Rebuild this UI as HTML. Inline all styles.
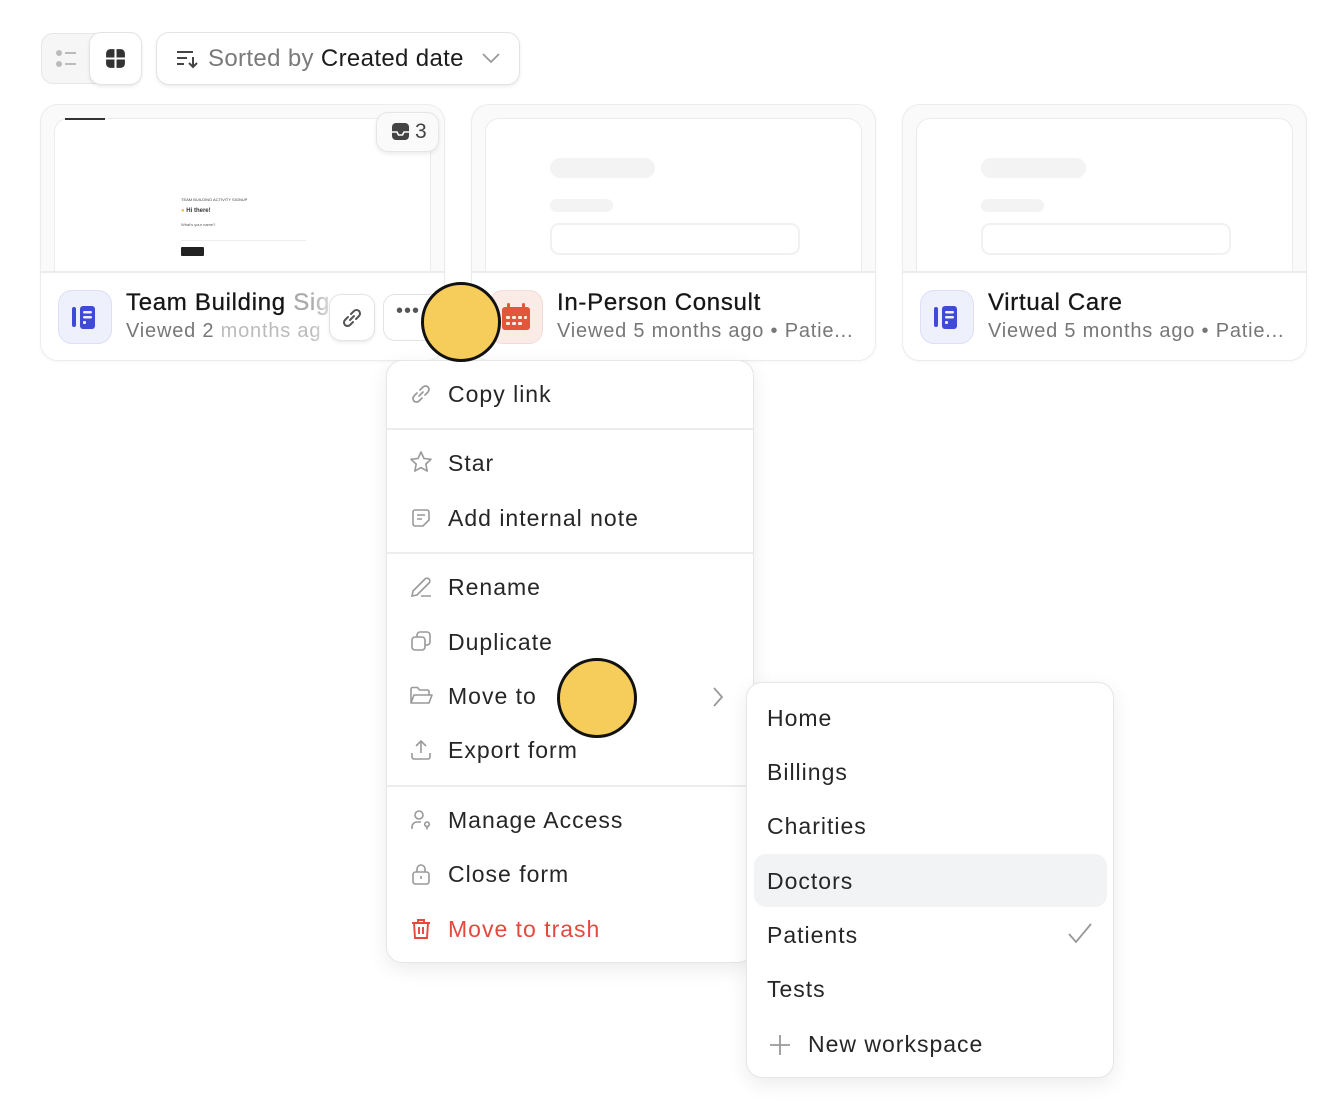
<!DOCTYPE html>
<html><head><meta charset="utf-8"><style>
*{box-sizing:border-box;margin:0;padding:0}
body{width:1343px;height:1110px;background:#fff;font-family:"Liberation Sans",sans-serif;position:relative;overflow:hidden;color:#1f1f1f}
.abs{position:absolute}
.card{position:absolute;top:104px;width:405px;height:257px;border:1px solid #ececec;border-radius:18px;background:#fafafa;overflow:hidden;box-shadow:0 1px 3px rgba(0,0,0,.04)}
.prev{position:absolute;left:13px;top:13px;right:13px;height:154px;background:#fff;border:1px solid #ebebeb;border-bottom:none;border-radius:14px 14px 0 0}
.foot{position:absolute;left:0;right:0;top:166px;bottom:0;background:#fff;border-top:2px solid #ececec}
.ic{position:absolute;left:17px;top:17px;width:54px;height:54px;border-radius:14px;border:1px solid #dcdff5;background:#eef0fc}
.t1{position:absolute;left:85px;top:16px;font-size:24px;letter-spacing:0.7px;color:#161616;white-space:nowrap;-webkit-text-stroke:0.3px #161616}
.t2{position:absolute;left:85px;top:47px;font-size:20px;letter-spacing:0.8px;color:#777;white-space:nowrap}
.sk{position:absolute;background:#f3f3f3;border-radius:10px}
.menu{position:absolute;background:#fff;border:1px solid #e6e6e6;border-radius:16px;box-shadow:0 6px 20px rgba(0,0,0,.08)}
.mi{position:absolute;left:61px;font-size:23px;letter-spacing:1px;color:#262626;white-space:nowrap}
.mic{position:absolute;left:22px}
.sep{position:absolute;left:0;right:0;height:2px;background:#ededed}
.si{position:absolute;left:20px;font-size:23px;letter-spacing:1px;color:#262626;white-space:nowrap}
.dot{position:absolute;width:80px;height:80px;border-radius:50%;background:#f6cd5a;border:3px solid #111}
</style></head><body>

<div class="abs" style="left:41px;top:33px;width:101px;height:51px;border:1px solid #e6e6e6;border-radius:12px;background:#f6f6f6"></div>
<svg class="abs" style="left:54px;top:47px" width="24" height="24" viewBox="0 0 24 24"><circle cx="5" cy="6" r="3" fill="#bbb"/><circle cx="5" cy="17" r="3" fill="#bbb"/><rect x="11" y="5" width="11" height="2" fill="#bbb"/><rect x="11" y="16" width="11" height="2" fill="#bbb"/></svg>
<div class="abs" style="left:89px;top:32px;width:53px;height:53px;border:1px solid #e3e3e3;border-radius:12px;background:#fff;box-shadow:0 2px 3px rgba(0,0,0,.08)"></div>
<svg class="abs" style="left:104px;top:47px" width="23" height="23" viewBox="0 0 22 22"><path d="M2 6a4 4 0 0 1 4-4h4v8H2z M12 2h4a4 4 0 0 1 4 4v4h-8z M2 12h8v8H6a4 4 0 0 1-4-4z M12 12h8v4a4 4 0 0 1-4 4h-4z" fill="#333"/></svg>

<div class="abs" style="left:156px;top:32px;width:364px;height:53px;border:1px solid #e3e3e3;border-radius:13px;background:#fff;box-shadow:0 2px 3px rgba(0,0,0,.07)"></div>
<svg class="abs" style="left:176px;top:49px" width="24" height="20" viewBox="0 0 24 20"><path d="M1 3h16M1 9h10M1 15h7M17 8v10M13 14l4 4 4-4" stroke="#444" stroke-width="2" fill="none"/></svg>
<div class="abs" style="left:208px;top:45px;font-size:24px;letter-spacing:0.35px;color:#7a7a7a;white-space:nowrap">Sorted by <span style="color:#1c1c1c">Created date</span></div>
<svg class="abs" style="left:481px;top:52px" width="20" height="12" viewBox="0 0 20 12"><path d="M2 2l8 8 8-8" stroke="#999" stroke-width="1.8" fill="none"/></svg>

<div class="card" style="left:40px">
 <div class="prev">
  <div class="abs" style="left:10px;top:-1px;width:40px;height:2px;background:#333"></div>
  <div class="abs" style="left:126px;top:78px;font-size:4px;color:#444">TEAM BUILDING ACTIVITY SIGNUP</div>
  <div class="abs" style="left:126px;top:89px;font-size:6px;font-weight:bold;color:#333"><span style="color:#f5b92e">●</span> Hi there!</div>
  <div class="abs" style="left:126px;top:103px;font-size:4px;color:#555">What's your name?</div>
  <div class="abs" style="left:126px;top:121px;width:125px;height:1px;background:#eee"></div>
  <div class="abs" style="left:126px;top:128px;width:23px;height:9px;background:#222;border-radius:1px"></div>
 </div>
 <div class="abs" style="left:335px;top:7px;width:63px;height:40px;background:#fafafa;border:1px solid #e6e6e6;border-radius:12px;box-shadow:0 2px 4px rgba(0,0,0,.08)"></div>
 <svg class="abs" style="left:350px;top:17px" width="19" height="19" viewBox="0 0 19 19"><rect x="1" y="1" width="17" height="17" rx="4" fill="#444"/><path d="M1 10h5l1.5 3h4l1.5-3h5" stroke="#fff" stroke-width="1.6" fill="none"/></svg>
 <div class="abs" style="left:374px;top:15px;font-size:21px;color:#444">3</div>
 <div class="foot">
  <div class="ic"><svg class="abs" style="left:11px;top:12px" width="30" height="30" viewBox="0 0 30 30"><rect x="2" y="4" width="4" height="20" rx="2" fill="#3f4ad6"/><rect x="10" y="3" width="15" height="23" rx="3" fill="#3f4ad6"/><rect x="13" y="8" width="9" height="2.5" rx="1.2" fill="#eef0fc"/><rect x="13" y="13" width="9" height="2.5" rx="1.2" fill="#eef0fc"/><rect x="13" y="18" width="3" height="3" rx="1" fill="#eef0fc"/></svg></div>
  <div class="t1">Team Building <span style="color:#aaa;-webkit-text-stroke:0.3px #aaa">Sig</span></div>
  <div class="t2">Viewed 2 <span style="color:#bbb">months ag</span></div>
  <div class="abs" style="left:270px;top:0;width:80px;height:90px;background:linear-gradient(90deg,rgba(255,255,255,0),#fff 40%)"></div>
  <div class="abs" style="left:288px;top:21px;width:46px;height:47px;border:1px solid #e3e3e3;border-radius:12px;background:#fff;box-shadow:0 2px 3px rgba(0,0,0,.07)"></div>
  <svg class="abs" style="left:299px;top:33px" width="24" height="24" viewBox="0 0 24 24"><path d="M10 14l4-4M8 11l-3 3a3.5 3.5 0 0 0 5 5l3-3M16 13l3-3a3.5 3.5 0 0 0-5-5l-3 3" stroke="#555" stroke-width="2" fill="none" stroke-linecap="round"/></svg>
  <div class="abs" style="left:342px;top:21px;width:60px;height:47px;border:1px solid #e3e3e3;border-radius:12px;background:#fff"></div>
  <div class="abs" style="left:355px;top:27px;font-size:20px;color:#555;letter-spacing:1px">•••</div>
 </div>
</div>

<div class="card" style="left:471px">
 <div class="prev"><div class="sk" style="left:64px;top:39px;width:105px;height:20px"></div><div class="sk" style="left:64px;top:80px;width:63px;height:13px"></div><div class="abs" style="left:64px;top:104px;width:250px;height:32px;border:2px solid #f1f1f1;border-radius:9px"></div></div>
 <div class="foot">
  <div class="ic" style="background:#fbebe7;border-color:#f2dcd6"><svg class="abs" style="left:10px;top:11px" width="32" height="30" viewBox="0 0 32 30"><rect x="2" y="5" width="28" height="23" rx="3" fill="#e4563a"/><rect x="7" y="1" width="3" height="7" rx="1.5" fill="#e4563a"/><rect x="22" y="1" width="3" height="7" rx="1.5" fill="#e4563a"/><g fill="#fbebe7"><rect x="6" y="14" width="4" height="3" rx="1"/><rect x="12" y="14" width="4" height="3" rx="1"/><rect x="18" y="14" width="4" height="3" rx="1"/><rect x="24" y="14" width="3" height="3" rx="1"/><rect x="6" y="20" width="4" height="3" rx="1"/><rect x="12" y="20" width="4" height="3" rx="1"/><rect x="18" y="20" width="4" height="3" rx="1"/></g></svg></div>
  <div class="t1">In-Person Consult</div>
  <div class="t2">Viewed 5 months ago • Patie...</div>
 </div>
</div>

<div class="card" style="left:902px">
 <div class="prev"><div class="sk" style="left:64px;top:39px;width:105px;height:20px"></div><div class="sk" style="left:64px;top:80px;width:63px;height:13px"></div><div class="abs" style="left:64px;top:104px;width:250px;height:32px;border:2px solid #f1f1f1;border-radius:9px"></div></div>
 <div class="foot">
  <div class="ic"><svg class="abs" style="left:11px;top:12px" width="30" height="30" viewBox="0 0 30 30"><rect x="2" y="4" width="4" height="20" rx="2" fill="#3f4ad6"/><rect x="10" y="3" width="15" height="23" rx="3" fill="#3f4ad6"/><rect x="13" y="8" width="9" height="2.5" rx="1.2" fill="#eef0fc"/><rect x="13" y="13" width="9" height="2.5" rx="1.2" fill="#eef0fc"/><rect x="13" y="18" width="3" height="3" rx="1" fill="#eef0fc"/></svg></div>
  <div class="t1">Virtual Care</div>
  <div class="t2">Viewed 5 months ago • Patie...</div>
 </div>
</div>

<div class="menu" style="left:386px;top:360px;width:368px;height:603px">
 <svg class="mic" style="top:21px" width="24" height="24" viewBox="0 0 24 24"><path d="M10 14l4-4M8 11l-3 3a3.5 3.5 0 0 0 5 5l3-3M16 13l3-3a3.5 3.5 0 0 0-5-5l-3 3" stroke="#999" stroke-width="1.7" fill="none" stroke-linecap="round"/></svg>
 <div class="mi" style="top:20px">Copy link</div>
 <div class="sep" style="top:67px"></div>
 <svg class="mic" style="top:89px" width="24" height="24" viewBox="0 0 24 24"><path d="M12 2l3 6.5 7 .8-5.2 4.8 1.4 7L12 17.6 5.8 21.1l1.4-7L2 9.3l7-.8z" stroke="#999" stroke-width="1.6" fill="none" stroke-linejoin="round"/></svg>
 <div class="mi" style="top:89px">Star</div>
 <svg class="mic" style="top:145px" width="24" height="24" viewBox="0 0 24 24"><path d="M4 6a2 2 0 0 1 2-2h12a2 2 0 0 1 2 2v8l-6 6H6a2 2 0 0 1-2-2z M8 9h8M8 13h5" stroke="#999" stroke-width="1.6" fill="none"/></svg>
 <div class="mi" style="top:144px">Add internal note</div>
 <div class="sep" style="top:191px"></div>
 <svg class="mic" style="top:214px" width="24" height="24" viewBox="0 0 24 24"><path d="M3 21l1-5L16 4a2.5 2.5 0 0 1 4 4L8 20zM12 21h10" stroke="#999" stroke-width="1.6" fill="none"/></svg>
 <div class="mi" style="top:213px">Rename</div>
 <svg class="mic" style="top:268px" width="24" height="24" viewBox="0 0 24 24"><rect x="3" y="8" width="13" height="13" rx="3" stroke="#999" stroke-width="1.6" fill="none"/><path d="M8 8V6a3 3 0 0 1 3-3h7a3 3 0 0 1 3 3v7a3 3 0 0 1-3 3h-2" stroke="#999" stroke-width="1.6" fill="none"/></svg>
 <div class="mi" style="top:268px">Duplicate</div>
 <svg class="mic" style="top:323px" width="25" height="24" viewBox="0 0 25 24"><path d="M2 19V5a1.5 1.5 0 0 1 1.5-1.5h5l2 2.5h8a1.5 1.5 0 0 1 1.5 1.5v3M2 19l3-8h18l-3 8z" stroke="#999" stroke-width="1.6" fill="none" stroke-linejoin="round"/></svg>
 <div class="mi" style="top:322px">Move to</div>
 <svg class="abs" style="left:324px;top:325px" width="14" height="22" viewBox="0 0 14 22"><path d="M3 2l8 9-8 9" stroke="#999" stroke-width="1.8" fill="none"/></svg>
 <svg class="mic" style="top:377px" width="24" height="24" viewBox="0 0 24 24"><path d="M12 15V3M7 8l5-5 5 5M3 15v4a2 2 0 0 0 2 2h14a2 2 0 0 0 2-2v-4" stroke="#999" stroke-width="1.6" fill="none"/></svg>
 <div class="mi" style="top:376px">Export form</div>
 <div class="sep" style="top:424px"></div>
 <svg class="mic" style="top:447px" width="24" height="24" viewBox="0 0 24 24"><circle cx="10" cy="7" r="4" stroke="#999" stroke-width="1.6" fill="none"/><path d="M3 21v-2a5 5 0 0 1 5-5h4M18 14a2.3 2.3 0 1 0 .01 0M18 18.5v3" stroke="#999" stroke-width="1.6" fill="none"/></svg>
 <div class="mi" style="top:446px">Manage Access</div>
 <svg class="mic" style="top:501px" width="24" height="24" viewBox="0 0 24 24"><rect x="4" y="10" width="16" height="12" rx="2.5" stroke="#999" stroke-width="1.6" fill="none"/><path d="M8 10V7a4 4 0 0 1 8 0v3M12 14v3" stroke="#999" stroke-width="1.6" fill="none"/></svg>
 <div class="mi" style="top:500px">Close form</div>
 <svg class="mic" style="top:556px" width="24" height="24" viewBox="0 0 24 24"><path d="M3 6h18M9 6V3h6v3M5 6l1 15h12l1-15M10 10v7M14 10v7" stroke="#e5483d" stroke-width="1.9" fill="none"/></svg>
 <div class="mi" style="top:555px;color:#e5483d">Move to trash</div>
</div>

<div class="menu" style="left:746px;top:682px;width:368px;height:396px">
 <div class="si" style="top:22px">Home</div>
 <div class="si" style="top:76px">Billings</div>
 <div class="si" style="top:130px">Charities</div>
 <div class="abs" style="left:7px;top:171px;width:353px;height:53px;background:#f2f3f5;border-radius:12px"></div>
 <div class="si" style="top:185px">Doctors</div>
 <div class="si" style="top:239px">Patients</div>
 <svg class="abs" style="left:320px;top:239px" width="26" height="22" viewBox="0 0 26 22"><path d="M2 12l7 8L24 2" stroke="#999" stroke-width="1.8" fill="none"/></svg>
 <div class="si" style="top:293px">Tests</div>
 <svg class="abs" style="left:21px;top:350px" width="24" height="24" viewBox="0 0 24 24"><path d="M12 2v20M2 12h20" stroke="#999" stroke-width="1.8"/></svg>
 <div class="si" style="top:348px;left:61px">New workspace</div>
</div>

<div class="dot" style="left:421px;top:282px"></div>
<div class="dot" style="left:557px;top:658px"></div>
</body></html>
